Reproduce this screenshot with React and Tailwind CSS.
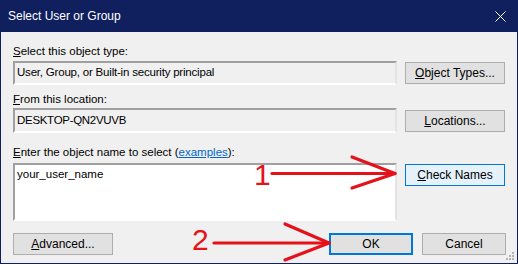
import React from "react";

const font = { fontFamily: '"Liberation Sans", Arial, sans-serif' };

// classic windows sunken edit box
const editBox =
  "border-2 border-t-[#a0a0a0] border-l-[#a0a0a0] border-r-[#e3e3e3] border-b-[#ffffff] box-border";

function Btn({ children, className = "" }) {
  return (
    <div
      className={
        "flex items-center justify-center text-[12px] text-black box-border " +
        className
      }
    >
      {children}
    </div>
  );
}

function Annotations() {
  // red arrows drawn over the dialog
  return (
    <>
      <svg
        className="absolute left-0 top-0 pointer-events-none"
        width="518"
        height="264"
        viewBox="0 0 518 264"
      >
        <g stroke="#e5121b" strokeWidth="3.2" strokeLinecap="round" fill="none">
          <line x1="271" y1="173.5" x2="393" y2="173.5" />
          <line x1="351" y1="157" x2="394" y2="173.5" />
          <line x1="351" y1="188" x2="394" y2="173.5" />
          <line x1="213" y1="243" x2="327" y2="243" />
          <line x1="284" y1="224" x2="328" y2="243" />
          <line x1="284" y1="260" x2="328" y2="243" />
        </g>
      </svg>
      <span className="absolute left-[253px] top-[160px] text-[30px] leading-[30px] text-[#e5121b]">
        1
      </span>
      <span className="absolute left-[191px] top-[225px] text-[30px] leading-[30px] text-[#e5121b]">
        2
      </span>
    </>
  );
}

export default function App() {
  return (
    <div
      style={font}
      className="relative w-[518px] h-[264px] bg-[#f0f0f0] border-x border-b border-[#10205e] flex flex-col overflow-hidden"
    >
      {/* title bar */}
      <div className="h-[32px] bg-[#10205e] flex items-center justify-between pl-[7px] pr-[11px] shrink-0">
        <span className="text-white text-[12px]">Select User or Group</span>
        <svg width="11" height="11" viewBox="0 0 11 11">
          <path d="M0.5 0.5 L10.5 10.5 M10.5 0.5 L0.5 10.5" stroke="#ffffff" strokeWidth="1" />
        </svg>
      </div>

      <div className="flex flex-col px-[12px] text-[11.5px] text-black">
        {/* object type */}
        <div className="mt-[12px] leading-[15px]">
          <span className="underline">S</span>elect this object type:
        </div>
        <div className="mt-[2px] flex items-center gap-[8px]">
          <div className={"flex-1 h-[24px] flex items-center pl-[2px] tracking-[-0.2px] " + editBox}>
            User, Group, or Built-in security principal
          </div>
          <Btn className="w-[100px] h-[22px] bg-[#e1e1e1] border border-[#adadad]">
            <span>
              <span className="underline">O</span>bject Types...
            </span>
          </Btn>
        </div>

        {/* location */}
        <div className="mt-[7px] leading-[15px]">
          <span className="underline">F</span>rom this location:
        </div>
        <div className="mt-[1px] flex items-center gap-[8px]">
          <div className={"flex-1 h-[25px] flex items-center pl-[2px] tracking-[-0.3px] " + editBox}>
            DESKTOP-QN2VUVB
          </div>
          <Btn className="w-[100px] h-[22px] bg-[#e1e1e1] border border-[#adadad]">
            <span>
              <span className="underline">L</span>ocations...
            </span>
          </Btn>
        </div>

        {/* object name */}
        <div className="mt-[12px] leading-[15px]">
          <span className="underline">E</span>nter the object name to select (
          <span className="text-[#0066cc] underline">examples</span>):
        </div>
        <div className="mt-[3px] flex items-start gap-[8px]">
          <div className={"flex-1 h-[58px] bg-white pl-[2px] pt-[2px] leading-[15px] " + editBox}>
            your_user_name
          </div>
          <Btn className="w-[100px] h-[22px] mt-[1px] bg-[#e5f1fb] border border-[#0078d7]">
            <span>
              <span className="underline">C</span>heck Names
            </span>
          </Btn>
        </div>

        {/* bottom buttons */}
        <div className="mt-[12px] flex items-center">
          <Btn className="w-[100px] h-[22px] bg-[#e1e1e1] border border-[#adadad]">
            <span>
              <span className="underline">A</span>dvanced...
            </span>
          </Btn>
          <div className="flex-1" />
          <Btn className="w-[84px] h-[22px] bg-[#e1e1e1] border-2 border-[#0078d7]">OK</Btn>
          <Btn className="w-[84px] h-[22px] ml-[9px] mr-[-1px] bg-[#e1e1e1] border border-[#adadad]">
            Cancel
          </Btn>
        </div>
      </div>

      {/* resize grip */}
      <svg className="absolute right-[2px] bottom-[2px]" width="9" height="9" viewBox="0 0 9 9">
        <g fill="#b4b4b4">
          <rect x="6" y="0" width="2" height="2" />
          <rect x="3" y="3" width="2" height="2" />
          <rect x="6" y="3" width="2" height="2" />
          <rect x="0" y="6" width="2" height="2" />
          <rect x="3" y="6" width="2" height="2" />
          <rect x="6" y="6" width="2" height="2" />
        </g>
      </svg>

      <Annotations />
    </div>
  );
}
